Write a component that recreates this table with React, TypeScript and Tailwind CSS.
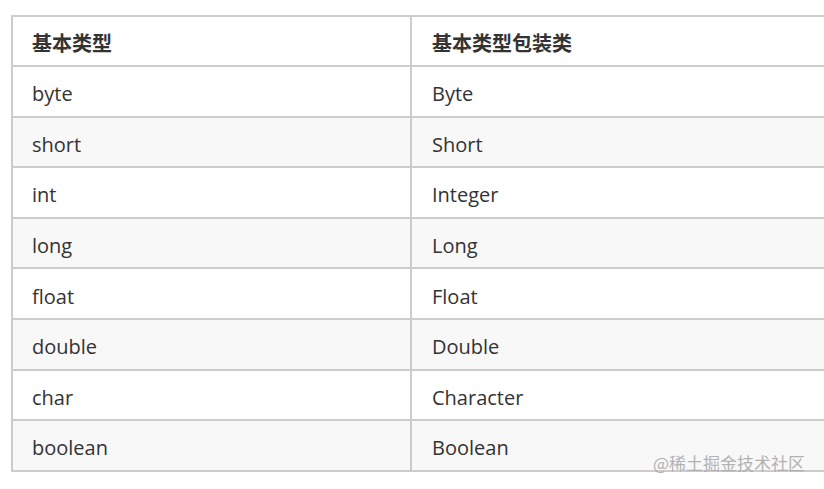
import React from "react";

const rows: [string, string][] = [
  ["byte", "Byte"],
  ["short", "Short"],
  ["int", "Integer"],
  ["long", "Long"],
  ["float", "Float"],
  ["double", "Double"],
  ["char", "Character"],
  ["boolean", "Boolean"],
];

export default function App() {
  return (
    <div
      className="relative w-[824px] h-[489px] bg-white overflow-hidden text-[#333]"
      style={{ fontFamily: '"Open Sans", "Noto Sans CJK SC", sans-serif' }}
    >
      <div className="pt-[15px] pl-[11px]">
        <div className="w-[900px] border-l-2 border-t-2 border-[#cccccc]">
          <div className="flex bg-white">
            <div className="w-[399px] h-[50px] border-r-2 border-b-2 border-[#cccccc] flex items-center pt-[5px] pl-[19px] text-[20px] font-bold">
              基本类型
            </div>
            <div className="flex-1 h-[50px] border-b-2 border-[#cccccc] flex items-center pt-[5px] pl-[20px] text-[20px] font-bold">
              基本类型包装类
            </div>
          </div>
          {rows.map(([a, b], i) => (
            <div key={a} className={i % 2 === 1 ? "flex bg-[#f8f8f8]" : "flex bg-white"}>
              <div className="w-[399px] h-[50.6px] border-r-2 border-b-2 border-[#cccccc] flex items-center pt-[6px] pl-[19px] text-[20px]">
                {a}
              </div>
              <div className="flex-1 h-[50.6px] border-b-2 border-[#cccccc] flex items-center pt-[6px] pl-[20px] text-[20px]">
                {b}
              </div>
            </div>
          ))}
        </div>
      </div>
      <div
        className="absolute left-[653px] top-[451px] text-[17px] leading-[24px] text-[#ababab] opacity-90"
        style={{ fontFamily: '"Noto Sans CJK SC", sans-serif' }}
      >
        @稀土掘金技术社区
      </div>
    </div>
  );
}
